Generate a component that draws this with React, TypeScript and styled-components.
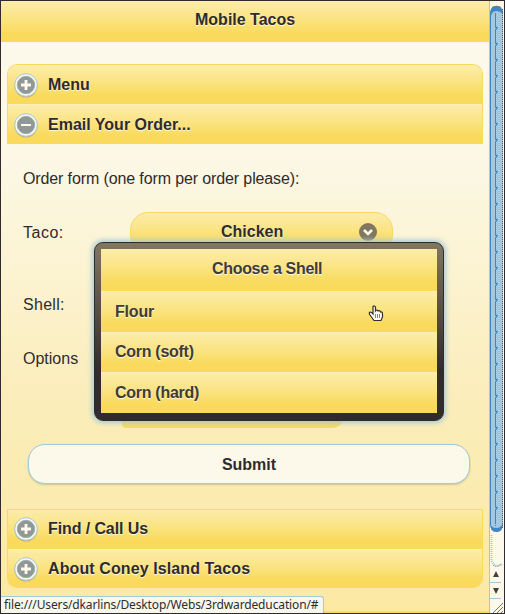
import React from "react";
import styled, { createGlobalStyle } from "styled-components";

const Global = createGlobalStyle`
  *, *::before, *::after { box-sizing: border-box; }
  body { margin: 0; overflow: hidden; font-family: "Liberation Sans", Arial, sans-serif; font-size: 16px; color: #2f2b2c; }
`;

const gold = "linear-gradient(#fcecaa 0%, #fbe588 38%, #f9da5c 80%, #f9da5c 100%)";

const Window = styled.div`
  position: relative;
  display: flex;
  width: 505px;
  height: 614px;
  border: 1px solid #322b2d;
  overflow: hidden;
`;

const Page = styled.main`
  width: 489px;
  height: 612px;
  display: flex;
  flex-direction: column;
  background: linear-gradient(#fcf9ea 0, #fcf9ea 130px, #fbedba 400px, #fbe9a4 100%);
  border-bottom: 2px solid #f9dc66;
`;

const Header = styled.header`
  height: 41px;
  flex: none;
  display: flex;
  align-items: center;
  justify-content: center;
  padding: 0 0 3px 1px;
  background: ${gold};
`;

const Label = styled.span<{ $width: number; $spacing?: number }>`
  width: ${(p) => p.$width}px;
  letter-spacing: ${(p) => p.$spacing ?? 0}px;
  white-space: nowrap;
  font-weight: bold;
  line-height: 18px;
  text-shadow: 0 1px 1px #fffbe9;
`;

const Accordion = styled.section<{ $edge: "top" | "bottom" }>`
  width: 476px;
  height: ${(p) => (p.$edge === "top" ? 80 : 79)}px;
  flex: none;
  margin: ${(p) => (p.$edge === "top" ? "22px 0 0 6px" : "25px 0 0 6px")};
  display: flex;
  flex-direction: column;
  border: 1px solid #f9da5c;
  border-bottom: 0;
  border-radius: ${(p) => (p.$edge === "top" ? "10px 10px 0 0" : "0 0 10px 10px")};
  overflow: hidden;
`;

const AccordionRow = styled.div`
  flex: 1;
  display: flex;
  align-items: center;
  gap: 10px;
  padding-left: 6px;
  background: ${gold};
  & + & { border-top: 1px solid #fcf0be; }
`;

const Icon = styled.svg`
  display: block;
  flex: none;
  overflow: visible;
`;

const Form = styled.form`
  height: 300px;
  flex: none;
  display: flex;
  flex-direction: column;
  padding: 26px 0 0 22px;
`;

const Intro = styled.p`
  margin: 0 0 35px;
  height: 18px;
  line-height: 18px;
  letter-spacing: -0.12px;
  white-space: nowrap;
`;

const Field = styled.div<{ $height: number }>`
  display: grid;
  grid-template-columns: 108px 1fr;
  height: ${(p) => p.$height}px;
  line-height: 20px;
`;

const FieldName = styled.span<{ $spacing?: number }>`
  letter-spacing: ${(p) => p.$spacing ?? 0}px;
`;

const Select = styled.div`
  width: 263px;
  height: 41px;
  margin: -11px 0 0 -1px;
  padding-bottom: 1px;
  display: grid;
  grid-template-columns: 90px 1fr 33px;
  align-items: center;
  border: 1px solid #f8d95b;
  border-radius: 18px;
  background: ${gold};
`;

const OptionsSelect = styled.div`
  width: 222px;
  height: 40px;
  margin: 39px 0 0 -9px;
  border-radius: 0 0 12px 4px;
  background: #f9da5c;
`;

const Submit = styled.button`
  width: 442px;
  height: 40px;
  flex: none;
  margin: 0 0 0 27px;
  padding: 2px 0 0;
  border: 1px solid #a4c8df;
  border-radius: 17px;
  background: #fcf9ea;
  box-shadow: 0 1px 2px #c5c795;
  font: inherit;
  color: inherit;
`;

const Popup = styled.div`
  position: absolute;
  left: 93px;
  top: 241px;
  width: 350px;
  height: 179px;
  padding: 7px 6px 7px 7px;
  border: 1px solid #322b2d;
  border-radius: 9px;
  background: linear-gradient(#81765e 0%, #776c59 10%, #322b2d 72%);
  box-shadow: 0 0 5px 2px #a9cbd6;
`;

const Choices = styled.div`
  height: 164px;
  margin: -1px 0 0 -1px;
  display: grid;
  grid-template-rows: 42px 41px 40px 41px;
`;

const Choice = styled.div<{ $title?: boolean }>`
  display: flex;
  align-items: center;
  justify-content: ${(p) => (p.$title ? "center" : "flex-start")};
  padding: 0 3px 3px ${(p) => (p.$title ? 0 : 14)}px;
  background: ${gold};
  color: #403b36;
  & + & { border-top: 1px solid #fceeb6; padding-bottom: 1px; }
`;

const Pointer = styled.svg`
  position: absolute;
  left: 367px;
  top: 304px;
`;

const Status = styled.div`
  position: absolute;
  left: 0;
  bottom: 0;
  width: 323px;
  height: 17px;
  padding-left: 3px;
  border: solid #a4c8df;
  border-width: 1px 1px 0 0;
  border-radius: 0 3px 0 0;
  background: #f7f7ec;
  font-family: "Noto Sans", sans-serif;
  font-size: 12px;
  line-height: 16px;
  letter-spacing: -0.13px;
  white-space: nowrap;
`;

const Rail = styled.aside`
  width: 15px;
  height: 612px;
  flex: none;
  background: #fcf9ea;
`;

const Toggle = ({ open }: { open?: boolean }) => (
  <Icon width="24" height="24" viewBox="0 0 24 24">
    <circle cx="12" cy="13" r="11.5" fill="#c8b66c" />
    <circle cx="12" cy="12" r="11.3" fill="#fcf9ea" stroke="#a4c8df" strokeWidth="1" />
    <circle cx="12" cy="12" r="8.7" fill="#8f9896" stroke="#9aafb6" strokeWidth="1" />
    <path d={open ? "M7 12H17" : "M7 12H17M12 7V17"} stroke="#fffcee" strokeWidth={open ? 2 : 2.8} />
  </Icon>
);

const ticks = Array.from({ length: 31 }, (_, i) => 27 + i * 16);

const Scrollbar = () => (
  <Icon width="15" height="612" viewBox="0 0 15 612">
    <path d="M.5 0V612" stroke="#a4c8df" />
    <path d="M1 522V14Q1 5 7.5 5Q14 5 14 14V522Q14 531 7.5 531Q1 531 1 522Z" fill="#a4c8df" />
    <path d="M1 15V13Q1 5 7.5 5Q14 5 14 13Q11 10 7.5 10Q3 10 2 15Z" fill="#4085c6" />
    <path d="M1.5 13V524" stroke="#4085c6" />
    <path d="M1 522Q2 527 7.5 527Q12 527 14 522Q14 531 7.5 531Q1 531 1 522Z" fill="#4085c6" />
    <path d="M3 6.5Q7.5 4 12 6.5" stroke="#81765e" fill="none" />
    <path d="M6.5 12V525" stroke="#4085c6" strokeDasharray="15 1" />
    {ticks.map((y) => (
      <path key={y} d={`M7 ${y - 2}l2 2l-2 2z`} fill="#4085c6" />
    ))}
    <path d="M13.5 8V528" stroke="#5f5650" strokeDasharray="1 1" />
    <path d="M2.5 534V560Q7 568 13 563" stroke="#a4c8df" strokeWidth="2" strokeDasharray="1 1" fill="none" />
    <path d="M4 564Q7.5 567 12 563" stroke="#81765e" strokeDasharray="1 1" fill="none" />
    <path d="M1 581.5H12M1 597.5H12" stroke="#a4c8df" />
    <path d="M4 576L7 570L10 576ZM4 587H10L7 593Z" fill="#4a413c" />
    <path d="M4 612L14 602M8 612L14 606M12 612L14 610" stroke="#81765e" />
  </Icon>
);

function Heading({ text, width, spacing, open }: { text: string; width: number; spacing?: number; open?: boolean }) {
  return (
    <AccordionRow>
      <Toggle open={open} />
      <Label $width={width} $spacing={spacing}>{text}</Label>
    </AccordionRow>
  );
}

export default function App() {
  return (
    <>
      <Global />
      <Window>
        <Page>
          <Header><Label $width={101}>Mobile Tacos</Label></Header>
          <Accordion $edge="top">
            <Heading text="Menu" width={42} />
            <Heading text="Email Your Order..." width={143} open />
          </Accordion>
          <Form>
            <Intro>Order form (one form per order please):</Intro>
            <Field $height={72}>
              <FieldName $spacing={0.5}>Taco:</FieldName>
              <Select>
                <i />
                <Label $width={63}>Chicken</Label>
                <Icon width="18" height="18" viewBox="0 0 18 18">
                  <circle cx="9" cy="9" r="9" fill="#81765e" />
                  <path d="M5 7L9 11L13 7" fill="none" stroke="#fcf9ea" strokeWidth="2.6" />
                </Icon>
              </Select>
            </Field>
            <Field $height={54}><FieldName $spacing={0.3}>Shell:</FieldName></Field>
            <Field $height={80}>
              <FieldName>Options</FieldName>
              <OptionsSelect />
            </Field>
          </Form>
          <Submit type="button"><Label $width={54}>Submit</Label></Submit>
          <Accordion $edge="bottom">
            <Heading text="Find / Call Us" width={101} spacing={-0.1} />
            <Heading text="About Coney Island Tacos" width={203} spacing={0.1} />
          </Accordion>
        </Page>
        <Rail><Scrollbar /></Rail>
        <Popup>
          <Choices>
            <Choice $title><Label $width={111} $spacing={-0.32}>Choose a Shell</Label></Choice>
            <Choice><Label $width={38} $spacing={-0.2}>Flour</Label></Choice>
            <Choice><Label $width={78} $spacing={-0.28}>Corn (soft)</Label></Choice>
            <Choice><Label $width={84} $spacing={-0.28}>Corn (hard)</Label></Choice>
          </Choices>
        </Popup>
        <Pointer width="16" height="17" viewBox="0 0 16 17">
          <path d="M5 1.5Q6.5.2 7.5 2V6Q9 4 10 6Q12 5 12.5 7Q14.5 6.5 14.5 9V12L13 15.5H6L2 10Q.5 8 2 7Q3.5 7 5 9Z" fill="#fffdf2" stroke="#302b2c" strokeWidth="1.2" />
          <path d="M7.5 9V13M9.5 9V13M11.5 9V13" stroke="#5e8fae" />
        </Pointer>
        <Status>file:///Users/dkarlins/Desktop/Webs/3rdwardeducation/#</Status>
      </Window>
    </>
  );
}
